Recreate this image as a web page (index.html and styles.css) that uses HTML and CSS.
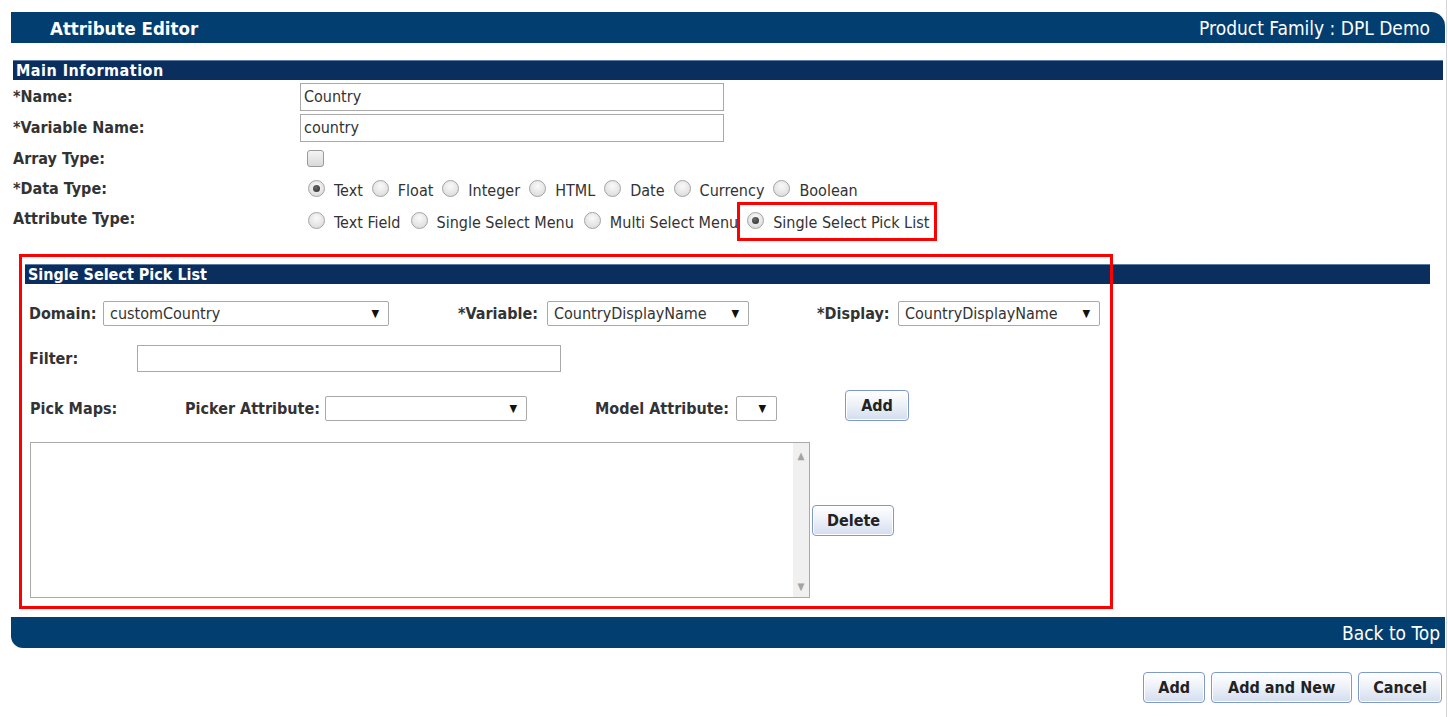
FILE: index.html
```html
<!DOCTYPE html>
<html lang="en">
<head>
  <meta charset="UTF-8">
  <title>Attribute Editor</title>
  <link rel="stylesheet" href="styles.css">
</head>
<body>
  <div class="page">
    <div class="titlebar">
      <span class="title">Attribute Editor</span>
      <span class="family">Product Family : DPL Demo</span>
    </div>

    <div class="section-bar main-bar">Main Information</div>
    <div class="main-info">
      <div class="row">
        <span class="lbl">*Name:</span>
        <input class="text-in" type="text" value="Country">
      </div>
      <div class="row">
        <span class="lbl">*Variable Name:</span>
        <input class="text-in" type="text" value="country">
      </div>
      <div class="row">
        <span class="lbl">Array Type:</span>
        <span class="check"></span>
      </div>
      <div class="row">
        <span class="lbl">*Data Type:</span>
        <div class="radios">
          <span class="opt"><i class="radio on"></i>Text</span>
          <span class="opt"><i class="radio"></i>Float</span>
          <span class="opt"><i class="radio"></i>Integer</span>
          <span class="opt"><i class="radio"></i>HTML</span>
          <span class="opt"><i class="radio"></i>Date</span>
          <span class="opt"><i class="radio"></i>Currency</span>
          <span class="opt"><i class="radio"></i>Boolean</span>
        </div>
      </div>
      <div class="row">
        <span class="lbl">Attribute Type:</span>
        <div class="radios attr-types">
          <span class="opt"><i class="radio"></i>Text Field</span>
          <span class="opt"><i class="radio"></i>Single Select Menu</span>
          <span class="opt"><i class="radio"></i>Multi Select Menu</span>
          <span class="opt marked"><i class="radio on"></i>Single Select Pick List</span>
        </div>
      </div>
    </div>

    <div class="picklist">
      <div class="annot"></div>
      <div class="section-bar pick-bar">Single Select Pick List</div>

      <div class="prow selects-row">
        <div class="cell domain-cell">
          <span class="plbl">Domain:</span>
          <div class="select domain-sel"><span>customCountry</span><b>&#9660;</b></div>
        </div>
        <div class="cell variable-cell">
          <span class="plbl">*Variable:</span>
          <div class="select"><span>CountryDisplayName</span><b>&#9660;</b></div>
        </div>
        <div class="cell display-cell">
          <span class="plbl">*Display:</span>
          <div class="select"><span>CountryDisplayName</span><b>&#9660;</b></div>
        </div>
      </div>

      <div class="prow filter-row">
        <span class="plbl filter-lbl">Filter:</span>
        <input class="filter-in" type="text">
      </div>

      <div class="prow maps-row">
        <span class="plbl maps-lbl">Pick Maps:</span>
        <span class="plbl picker-lbl">Picker Attribute:</span>
        <div class="select"><span></span><b>&#9660;</b></div>
        <span class="plbl model-lbl">Model Attribute:</span>
        <div class="select tiny-sel"><span></span><b>&#9660;</b></div>
        <button class="btn add-map">Add</button>
      </div>

      <div class="prow list-row">
        <div class="listbox">
          <div class="list-body"></div>
          <div class="list-scroll"><span>&#9650;</span><span>&#9660;</span></div>
        </div>
        <button class="btn">Delete</button>
      </div>
    </div>

    <div class="footbar">Back to Top</div>

    <div class="actions">
      <button class="btn">Add</button>
      <button class="btn">Add and New</button>
      <button class="btn">Cancel</button>
    </div>
  </div>
</body>
</html>
```

FILE: styles.css
```css
body {
  margin: 0;
  padding: 0;
  font-family: 'DejaVu Sans Condensed', 'Liberation Sans', sans-serif;
  font-size: 16px;
  color: #333;
  background: #fff;
}

.page {
  width: 1447px;
  min-height: 717px;
  padding-top: 12px;
  box-sizing: border-box;
  border-right: 1px solid #d4d4d4;
}

.titlebar {
  margin-left: 11px;
  width: 1434px;
  height: 31px;
  box-sizing: border-box;
  padding: 1px 15px 0 39px;
  display: flex;
  align-items: center;
  justify-content: space-between;
  background-color: #023e70;
  border-top-right-radius: 14px;
  color: #fff;
  font-size: 19px;
}

.title {
  font-weight: bold;
  font-size: 18.5px;
}

.section-bar {
  height: 20px;
  box-sizing: border-box;
  border-top: 1px solid #5d7ca3;
  background-color: #0a2f5f;
  color: #fff;
  font-weight: bold;
  font-size: 16px;
  line-height: 19px;
  padding-left: 3px;
}

.main-bar {
  margin: 17px 0 0 13px;
  width: 1430px;
  letter-spacing: 0.5px;
}

.main-info {
  margin-left: 13px;
  padding-top: 1px;
}

.row {
  display: flex;
  align-items: center;
  height: 30px;
}

.row:nth-child(1), .row:nth-child(2) {
  height: 31px;
}

.lbl {
  width: 287px;
  font-weight: bold;
}

.text-in {
  width: 424px;
  height: 28px;
  box-sizing: border-box;
  border: 1px solid #a9a9a9;
  padding: 0 3px;
  font-family: inherit;
  font-size: 16px;
  color: #333;
}

.check {
  display: inline-block;
  width: 17px;
  height: 17px;
  margin-left: 7px;
  box-sizing: border-box;
  border: 1px solid #9a9a9a;
  border-radius: 3px;
  background: linear-gradient(#f4f4f4, #d9d9d9);
}

.radios {
  display: flex;
  align-items: center;
  margin-left: 8px;
  padding-top: 4px;
}

.attr-types {
  padding-top: 8px;
}

.opt {
  display: inline-flex;
  align-items: center;
  margin-right: 9px;
}

.attr-types .opt {
  margin-right: 10px;
}

.radio {
  display: inline-block;
  width: 17px;
  height: 17px;
  margin-right: 9px;
  margin-top: -4px;
  box-sizing: border-box;
  border: 1px solid #a3a3a3;
  border-radius: 50%;
  background: radial-gradient(circle at 50% 35%, #fafafa, #d6d6d6);
  position: relative;
}

.radio.on::after {
  content: '';
  position: absolute;
  left: 4px;
  top: 4px;
  width: 7px;
  height: 7px;
  border-radius: 50%;
  background: radial-gradient(circle at 40% 35%, #6a6a6a, #2a2a2a);
}

.attr-types .marked {
  border: 3px solid #f00;
  padding: 8px 5px 6px 7px;
  margin: -11px 0 -9px -11px;
}

.picklist {
  position: relative;
  margin: 31px 0 0 25px;
}

.annot {
  position: absolute;
  left: -6px;
  top: -10px;
  width: 1094px;
  height: 355px;
  box-sizing: border-box;
  border: 3px solid #f00;
  z-index: 2;
  pointer-events: none;
}

.pick-bar {
  width: 1405px;
}

.prow {
  display: flex;
  align-items: center;
  padding-left: 4px;
}

.plbl {
  font-weight: bold;
}

.selects-row {
  margin-top: 17px;
  height: 25px;
}

.cell {
  display: flex;
  align-items: center;
}

.domain-cell { width: 429px; }
.domain-cell .plbl { width: 74px; }
.variable-cell { width: 359px; }
.variable-cell .plbl { width: 89px; }
.display-cell .plbl { width: 81px; }

.select {
  width: 202px;
  height: 25px;
  box-sizing: border-box;
  border: 1px solid #a9a9a9;
  border-radius: 2px;
  display: flex;
  align-items: center;
  justify-content: space-between;
  padding: 0 9px 0 6px;
  background: #fff;
  font-size: 16px;
}

.select b {
  font-size: 11px;
  color: #111;
}

.domain-sel {
  width: 286px;
}

.filter-row {
  margin-top: 19px;
}

.filter-lbl {
  width: 108px;
}

.filter-in {
  width: 424px;
  height: 27px;
  box-sizing: border-box;
  border: 1px solid #a9a9a9;
}

.maps-row {
  margin-top: 19px;
  height: 30px;
  align-items: flex-end;
  padding-left: 5px;
}

.maps-row .plbl {
  align-self: center;
  padding-top: 5px;
}

.maps-lbl { width: 155px; }
.picker-lbl { width: 140px; }
.model-lbl {
  margin-left: 68px;
  width: 141px;
}

.tiny-sel {
  width: 41px;
  padding-right: 10px;
}

.add-map {
  margin-left: 68px;
  width: 64px;
  height: 30px;
}

.list-row {
  margin-top: 21px;
  padding-left: 5px;
}

.listbox {
  width: 780px;
  height: 156px;
  box-sizing: border-box;
  border: 1px solid #a9a9a9;
  display: flex;
}

.list-body {
  flex: 1;
}

.list-scroll {
  width: 16px;
  background-color: #f0f0f0;
  display: flex;
  flex-direction: column;
  justify-content: space-between;
  align-items: center;
  padding: 7px 0 5px;
  color: #a3a3a3;
  font-size: 10px;
}

.list-row .btn {
  margin-left: 2px;
  width: 82px;
}

.btn {
  height: 31px;
  box-sizing: border-box;
  border: 1px solid #7d9acb;
  border-radius: 4px;
  background: linear-gradient(#ffffff, #eef2f9 45%, #d3ddef);
  box-shadow: inset 0 0 0 1px #fff;
  font-family: inherit;
  font-size: 16px;
  font-weight: bold;
  color: #222;
  padding: 0 14px;
}

.actions .btn:nth-child(2) {
  padding: 0 16px;
}

.footbar {
  margin: 19px 0 0 11px;
  width: 1434px;
  height: 31px;
  box-sizing: border-box;
  padding-right: 5px;
  background-color: #023e70;
  border-bottom-left-radius: 12px;
  color: #fff;
  font-size: 19px;
  line-height: 33px;
  text-align: right;
}

.actions {
  display: flex;
  justify-content: flex-end;
  gap: 6px;
  margin-top: 24px;
  padding-right: 4px;
}
```
